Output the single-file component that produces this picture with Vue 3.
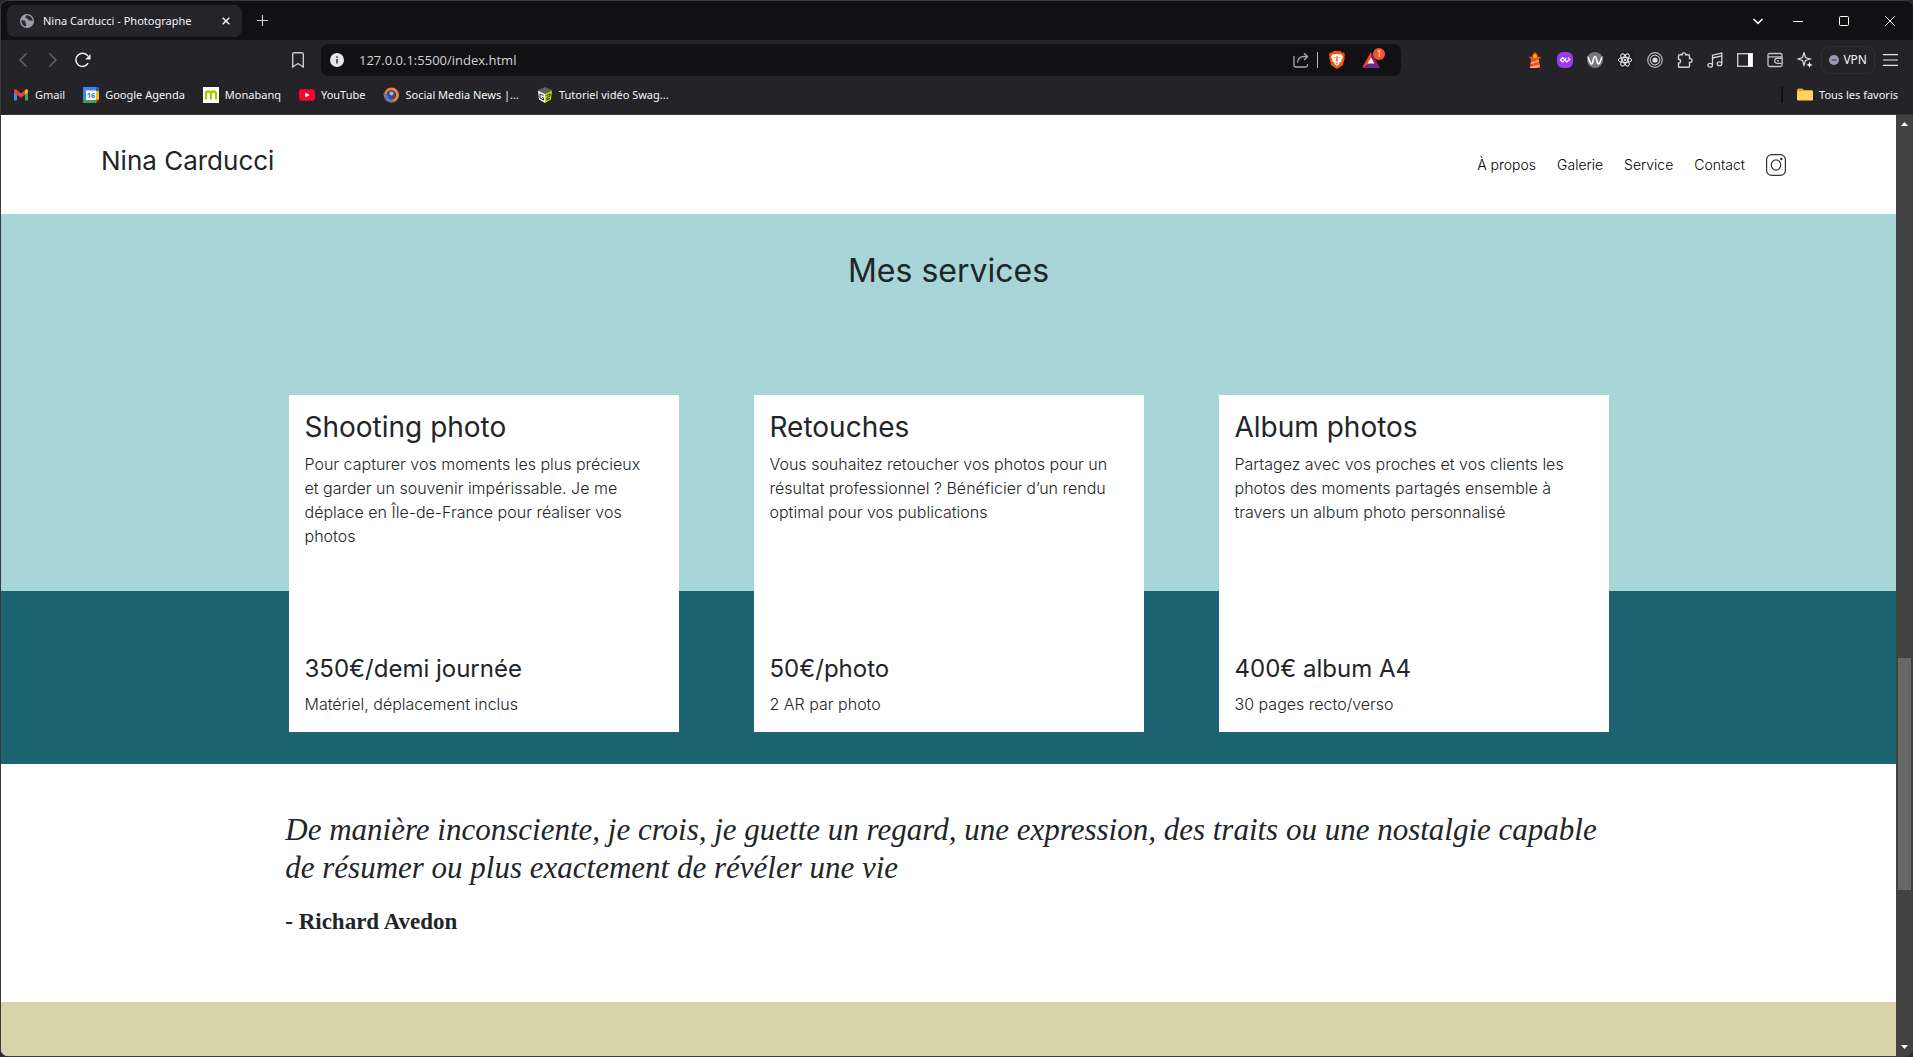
<script setup>
const bookmarks = [
  { id: 'gmail', label: 'Gmail' },
  { id: 'agenda', label: 'Google Agenda' },
  { id: 'mona', label: 'Monabanq' },
  { id: 'youtube', label: 'YouTube' },
  { id: 'social', label: 'Social Media News |...' },
  { id: 'swag', label: 'Tutoriel vidéo Swag...' },
]

const links = ['À propos', 'Galerie', 'Service', 'Contact']

const services = [
  {
    title: 'Shooting photo',
    text: 'Pour capturer vos moments les plus précieux et garder un souvenir impérissable. Je me déplace en Île-de-France pour réaliser vos photos',
    price: '350€/demi journée',
    detail: 'Matériel, déplacement inclus',
  },
  {
    title: 'Retouches',
    text: 'Vous souhaitez retoucher vos photos pour un résultat professionnel ? Bénéficier d’un rendu optimal pour vos publications',
    price: '50€/photo',
    detail: '2 AR par photo',
  },
  {
    title: 'Album photos',
    text: 'Partagez avec vos proches et vos clients les photos des moments partagés ensemble à travers un album photo personnalisé',
    price: '400€ album A4',
    detail: '30 pages recto/verso',
  },
]
</script>

<template>
  <div class="window">
    <div class="tabbar">
      <div class="tab">
        <svg width="14" height="14" viewBox="0 0 14 14"><circle cx="7" cy="7" r="7" fill="#9b9ea6" /><path d="M1.3 6.2c1.7.2 3.4-.1 4 .9.5.8-.3 1.6.5 2.2.8.5.6 1.6.1 3.2C3 12 1.200 9.500 1.300 6.200zM6.300 1.300c-.2 1.200-1.200 1.300-.9 2.200.4.8 1.600.3 1.800 1.300.2 1 1.200.7 1.600 1.300.5.7 1.700.6 3.900.6C12.500 3.500 9.800 1.200 6.300 1.300z" fill="#2b2b30" /></svg>
        <span class="tab-title">Nina Carducci - Photographe</span>
        <button class="icon-btn" aria-label="Fermer l'onglet"><svg width="8" height="8" viewBox="0 0 8 8" stroke="#f2f2f4" stroke-width="1.500"><path d="M.7.700l6.600 6.600M7.300.700L.7 7.300" /></svg></button>
      </div>
      <button class="icon-btn plus" aria-label="Nouvel onglet"><svg width="11" height="11" viewBox="0 0 11 11" stroke="#c9c9cc" stroke-width="1.200"><path d="M5.500 0v11M0 5.500h11" /></svg></button>
      <div class="win-controls">
        <button class="icon-btn" aria-label="Rechercher des onglets"><svg width="12" height="12" viewBox="0 0 12 12" fill="none" stroke="#fff" stroke-width="1.600"><path d="M1.500 4L6 8.300 10.500 4" /></svg></button>
        <button class="icon-btn" aria-label="Réduire"><svg width="10" height="10" viewBox="0 0 10 10" stroke="#fff"><path d="M0 5.500h10" /></svg></button>
        <button class="icon-btn" aria-label="Agrandir"><svg width="10" height="10" viewBox="0 0 10 10" fill="none" stroke="#fff"><rect x=".5" y=".5" width="9" height="9" rx="1" /></svg></button>
        <button class="icon-btn" aria-label="Fermer"><svg width="10" height="10" viewBox="0 0 10 10" stroke="#fff"><path d="M.3.300l9.400 9.400M9.700.300L.3 9.700" /></svg></button>
      </div>
    </div>

    <div class="toolbar">
      <div class="nav-buttons">
        <button class="icon-btn" aria-label="Précédent"><svg width="16" height="16" viewBox="0 0 16 16" fill="none" stroke="#6c6c70" stroke-width="1.300"><path d="M11.500 1.500L5 8l6.500 6.500" /></svg></button>
        <button class="icon-btn" aria-label="Suivant"><svg width="16" height="16" viewBox="0 0 16 16" fill="none" stroke="#6c6c70" stroke-width="1.300"><path d="M4.500 1.500L11 8l-6.500 6.500" /></svg></button>
        <button class="icon-btn" aria-label="Actualiser"><svg width="16" height="16" viewBox="0 0 16 16" fill="none" stroke="#f2f2f4" stroke-width="1.500"><path d="M13.200 11.200A6.600 6.600 0 1 1 13 4.200" /><path d="M15.500 2v5.500h-5.200z" fill="#f2f2f4" stroke="none" /></svg></button>
      </div>
      <button class="icon-btn" aria-label="Ajouter aux favoris"><svg width="12" height="16" viewBox="0 0 12 16" fill="none" stroke="#c9c9cc" stroke-width="1.400"><path d="M.7 15V2.200Q.7.700 2.200.700h7.600q1.500 0 1.500 1.500V15L6 11.500z" /></svg></button>
      <div class="address">
        <svg width="14" height="14" viewBox="0 0 14 14"><circle cx="7" cy="7" r="7" fill="#e6e6ea" /><path d="M6.200 6h1.600v4.500H6.200zM6.200 3.300h1.600v1.500H6.200z" fill="#3a3a3e" /></svg>
        <input type="text" value="127.0.0.1:5500/index.html" aria-label="Adresse" />
        <button class="icon-btn" aria-label="Partager"><svg width="16" height="16" viewBox="0 0 16 16" fill="none" stroke="#a9a9ad" stroke-width="1.300"><path d="M1 4v9q0 2 2 2h10q1.500 0 1.500-1.500V12M4.500 10.500C4.800 6.500 7 4.500 11 4.500h3.500M11 1.200l3.600 3.300L11 8" /></svg></button>
        <span class="divider"></span>
        <button class="icon-btn brave" aria-label="Brave Shields"><svg width="16" height="18" viewBox="0 0 16 18"><path d="M4.500 0h7l1.600 1.700 1.700-.2 1.200 2.200-.6 1.500.4 1.500-2 7.500L8 18l-5.800-3.800L.2 6.700l.4-1.500L0 3.700l1.200-2.200 1.700.2z" fill="#ff5000" /><path d="M3.500 3.500L8 3l4.500.5 1.600 2.600-1.700 2.700.3 1.400-2.400 1.500.3 1.200L8 15l-2.600-2.100.3-1.200-2.400-1.500.3-1.400L1.900 6.100z" fill="#fff" /><path d="M3.800 5.800l2.700.8-.5 1zM12.200 5.800l-2.700.8.500 1zM7.500 5h1L8.700 9l.7.800-1.400.6-1.400-.6.700-.8zM6.500 12L8 11.400 9.500 12 8 13z" fill="#ff5000" /></svg></button>
        <button class="icon-btn bat" aria-label="Brave Rewards"><svg width="18" height="16" viewBox="0 0 18 16"><path d="M9 0L0 16l9-5.500z" fill="#ff4724" /><path d="M9 0l9 16-9-5.500z" fill="#9e1f63" /><path d="M0 16h18l-9-6z" fill="#662d91" /><path d="M9 5.500L5.600 11.500h6.800z" fill="#fff" /></svg><span class="badge">1</span></button>
      </div>
      <div class="extensions">
        <svg viewBox="0 0 16 16"><path d="M5.500 2.500L8 0l2.500 2.500v2.200h3v1.800h-1.600l1.300 9.500H2.800l1.300-9.500H2.500V4.700h3z" fill="#f4511e" /><circle cx="8" cy="4.200" r="1.800" fill="#ffc107" /><path d="M4 10.500l7.800-2.500.2 1.500L3.700 12.300zM3 15l9.500-2.200.3 1.700-4 1.500H3z" fill="#ffab91" /></svg>
        <svg viewBox="0 0 16 16"><rect width="16" height="16" rx="6" fill="#9b3bf0" /><path d="M9.200 6L6.800 8.900 5.500 10 3.300 8l2.300-2.300L7.500 7.500l2 2.500 3.300-2.400L11 5.600" fill="none" stroke="#fff" stroke-width="1.200" stroke-linejoin="round" /></svg>
        <svg viewBox="0 0 16 16"><circle cx="8" cy="8" r="8" fill="#77777a" /><path d="M.5 5.500C2 4.500 2.500 12 4.500 12S6 4.500 8 4.500 9.500 12 11.500 12 14 4.500 15.500 5.500" fill="none" stroke="#fff" stroke-width="1.600" /></svg>
        <svg viewBox="0 0 16 16" fill="none" stroke="#f0f0f0" stroke-width="1"><rect width="16" height="16" fill="#1d1d20" stroke="none" /><ellipse cx="8" cy="8" rx="6.800" ry="2.600" /><ellipse cx="8" cy="8" rx="6.800" ry="2.600" transform="rotate(60 8 8)" /><ellipse cx="8" cy="8" rx="6.800" ry="2.600" transform="rotate(120 8 8)" /><circle cx="8" cy="8" r=".8" fill="#fff" /></svg>
        <svg viewBox="0 0 16 16" fill="none" stroke="#b9b9bc" stroke-width="1.200"><circle cx="8" cy="8" r="7.300" /><circle cx="8" cy="8" r="4.800" /><circle cx="8" cy="8" r="2.600" fill="#dcdcde" stroke="none" /></svg>
        <svg viewBox="0 0 16 16" fill="none" stroke="#d5d5d8" stroke-width="1.400"><path d="M1.500 4q0-1.300 1.300-1.300h2.400C4.600.2 9 .2 8.600 2.700h2.600q1.300 0 1.300 1.300v2.600c3.400-.5 3.400 4.300 0 3.800V14q0 1.300-1.300 1.300H2.800Q1.500 15.300 1.500 14v-2.700c2.700.2 2.700-4.300 0-4z" /></svg>
        <svg viewBox="0 0 16 16" fill="none" stroke="#d5d5d8" stroke-width="1.300"><path d="M5.500 13V3.200L14.800 1v10.500M5.500 6l9.300-2.200" /><ellipse cx="3.200" cy="13.200" rx="2.300" ry="1.900" /><ellipse cx="12.500" cy="11.700" rx="2.300" ry="1.900" /></svg>
        <svg viewBox="0 0 16 16"><rect x=".7" y="1.700" width="14.600" height="12.600" fill="none" stroke="#d5d5d8" stroke-width="1.300" /><path d="M11 1.500h4.500v13H11z" fill="#fff" /></svg>
        <svg viewBox="0 0 16 16" fill="none" stroke="#c5c5c8" stroke-width="1.300"><path d="M15 5V3q0-1.500-1.500-1.500h-11Q1 1.500 1 3v10q0 1.500 1.500 1.500h11Q15 14.500 15 13v-1M1 4.800h13q1.200 0 1.200 1v5.500h-5a2.500 2.500 0 0 1 0-5h5" /><path d="M10 8.800h2" /></svg>
        <svg viewBox="0 0 16 16" fill="none" stroke="#e0e0e2" stroke-width="1.200"><path d="M7 .8l1.500 4.700 4.700 1.500-4.700 1.500L7 13.200 5.500 8.500.8 7l4.700-1.500z" /><path d="M12.500 9.700l.9 2.300 2.300.9-2.300.9-.9 2.200-.9-2.200-2.300-.9 2.300-.9z" fill="#fff" stroke="none" /></svg>
      </div>
      <button class="vpn"><svg width="10" height="10" viewBox="0 0 10 10"><circle cx="5" cy="5" r="5" fill="#9a9bb0" /><path d="M2.500 5h5" stroke="#3d3d4a" stroke-width="1.200" /></svg>VPN</button>
      <button class="icon-btn menu" aria-label="Menu"><svg width="15" height="12" viewBox="0 0 15 12" stroke="#e8e8ea" stroke-width="1.200"><path d="M0 .600h15M0 6h15M0 11.400h15" /></svg></button>
    </div>

    <div class="bookmarks">
      <a v-for="b in bookmarks" :key="b.id" href="#" class="bookmark">
        <svg v-if="b.id === 'gmail'" viewBox="0 0 16 16"><path d="M1 4v9.500h3V7z" fill="#4285f4" /><path d="M15 4v9.500h-3V7z" fill="#34a853" /><path d="M1 4q0-2 1.800-1.700L8 6.500l5.200-4.200Q15 2 15 4v1.500l-7 5.200L1 5.500z" fill="#ea4335" /><path d="M12 3.300l1.200-1Q15 2 15 4v1.500L12 7.700z" fill="#fbbc04" /></svg>
        <svg v-else-if="b.id === 'agenda'" viewBox="0 0 16 16"><path d="M0 0h13v4H4v9H0z" fill="#4285f4" /><path d="M13 0h3v4h-3z" fill="#1967d2" /><path d="M12.500 4H16v9h-3.500z" fill="#fbbc04" /><path d="M0 12.500h13V16H0z" fill="#34a853" /><path d="M13 12.500h3L13 16z" fill="#ea4335" /><path d="M3 3.500h10V13H3z" fill="#fff" /><text x="8" y="11" text-anchor="middle" class="day">16</text></svg>
        <svg v-else-if="b.id === 'mona'" viewBox="0 0 16 16"><path d="M0 0h16v16H0z" fill="#fff" /><path d="M3 12.500V4M3 7q0-2.500 2.500-2.500T8 7v5.500M8 7q0-2.500 2.500-2.500T13 7v5.500" fill="none" stroke="#b1c800" stroke-width="2.300" /></svg>
        <svg v-else-if="b.id === 'youtube'" viewBox="0 0 16 16"><rect y="2.300" width="16" height="11.400" rx="3" fill="#ff0033" /><path d="M6.300 5.500l4.300 2.500-4.300 2.500z" fill="#fff" /></svg>
        <svg v-else-if="b.id === 'social'" viewBox="0 0 16 16"><circle cx="8.500" cy="8" r="6" fill="none" stroke="#f08428" stroke-width="3" /><circle cx="8" cy="8" r="4.500" fill="#34478f" /><circle cx="8.500" cy="6.500" r="2" fill="#a9b8e8" /><path d="M0 6.500l4.500 1L6 12l6 1.500-4 2-5-2z" fill="#6175bb" /></svg>
        <svg v-else viewBox="0 0 16 16"><path d="M8 0l7 3.200L8 7 1 3.200z" fill="#5e6062" /><path d="M1 3.500L8 7v9l-6-3.500z" fill="#f1f1f1" /><path d="M15 3.500L8 7v9l6-3.500z" fill="#b5d900" /><path d="M6.500 8.500L3 7v4l3.500 2v-2L4.800 10M9.500 8.500L13 7v2l-3 1.500V13l3-1.800" fill="none" stroke="#333" stroke-width="1" /></svg>
        {{ b.label }}
      </a>
      <a href="#" class="bookmark all">
        <svg viewBox="0 0 16 16"><path d="M0 3q0-1.500 1.500-1.500h3.700L7 3h7.500Q16 3 16 4.500V6H0z" fill="#e8a51c" /><path d="M0 5q0-1 1-1h14q1 0 1 1v7.500q0 1-1 1H1q-1 0-1-1z" fill="#ffd45e" /></svg>
        Tous les favoris
      </a>
    </div>

    <div class="viewport">
      <div class="site">
        <header class="header">
          <h1>Nina Carducci</h1>
          <nav>
            <a v-for="l in links" :key="l" href="#">{{ l }}</a>
            <a href="#" aria-label="Instagram"><svg width="20" height="22" viewBox="0 0 20 22" fill="none" stroke="#333" stroke-width="1.200"><rect x=".6" y=".6" width="18.800" height="20.800" rx="5" /><ellipse cx="10" cy="11" rx="4.700" ry="5.200" /><circle cx="15.300" cy="5" r=".7" fill="#333" /></svg></a>
          </nav>
        </header>

        <section class="services">
          <h2>Mes services</h2>
          <div class="cards">
            <article v-for="s in services" :key="s.title" class="card">
              <h3>{{ s.title }}</h3>
              <p>{{ s.text }}</p>
              <h4>{{ s.price }}</h4>
              <p>{{ s.detail }}</p>
            </article>
          </div>
        </section>

        <section class="quote">
          <blockquote>De manière inconsciente, je crois, je guette un regard, une expression, des traits ou une nostalgie capable de résumer ou plus exactement de révéler une vie</blockquote>
          <p class="author">- Richard Avedon</p>
        </section>

        <section class="contact"></section>
      </div>
      <div class="scrollbar">
        <svg width="7" height="4" viewBox="0 0 7 4"><path d="M0 4L3.500 0 7 4z" fill="#fff" /></svg>
        <div class="track"><div class="thumb"></div></div>
        <svg width="7" height="4" viewBox="0 0 7 4"><path d="M0 0l3.500 4L7 0z" fill="#fff" /></svg>
      </div>
    </div>
  </div>
</template>

<style>
body {
  background: #2b2b2e;
}
</style>

<style scoped>
* {
  box-sizing: border-box;
}
h1, h2, h3, h4, p, blockquote {
  margin: 0;
}
a {
  color: inherit;
  text-decoration: none;
}
button {
  border: 0;
  background: none;
  padding: 0;
  color: inherit;
  font: inherit;
}
svg {
  display: block;
  flex: none;
}
.window {
  display: flex;
  flex-direction: column;
  min-height: 100vh;
  border: 1px solid #3a3a3d;
  border-right: 0;
  border-radius: 8px;
  overflow: hidden;
  background: #242428;
  color: #f4f4f6;
  font: 11px/16px "Noto Sans", "Open Sans", sans-serif;
}
.icon-btn {
  display: flex;
  align-items: center;
  justify-content: center;
}
.tabbar {
  display: flex;
  align-items: center;
  height: 39px;
  padding: 0 18px 0 6px;
  background: #111113;
}
.tab {
  display: flex;
  align-items: center;
  gap: 9px;
  width: 235px;
  height: 32px;
  padding: 0 12px 0 13px;
  border-radius: 8px;
  background: #252529;
}
.tab-title {
  flex: 1;
  white-space: nowrap;
}
.plus {
  margin-left: 15px;
}
.win-controls {
  display: flex;
  align-items: center;
  gap: 36px;
  margin-left: auto;
}
.win-controls .icon-btn:first-child {
  margin-right: -7px;
}
.toolbar {
  display: flex;
  align-items: center;
  height: 40px;
  padding: 0 15px 0 14px;
}
.nav-buttons {
  display: flex;
  gap: 14px;
  margin-right: 201px;
}
.address {
  display: flex;
  flex: 1;
  align-items: center;
  height: 32px;
  margin: 0 126px 0 17px;
  padding: 0 21px 0 9px;
  border-radius: 8px;
  background: #111113;
}
.address input {
  flex: 1;
  min-width: 0;
  margin: 0 15px;
  padding: 0;
  border: 0;
  outline: 0;
  background: none;
  color: #d4d4d7;
  font: 13px/20px "Open Sans", "Noto Sans", sans-serif;
}
.divider {
  width: 1px;
  height: 16px;
  margin: 0 11px 0 8px;
  background: #b9b9bc;
}
.brave {
  margin-right: 17px;
}
.bat {
  position: relative;
}
.badge {
  position: absolute;
  top: -4px;
  left: 11px;
  width: 12px;
  height: 12px;
  border-radius: 6px;
  background: #fb542b;
  color: #fff;
  font-size: 8px;
  line-height: 12px;
  text-align: center;
}
.extensions {
  display: flex;
  gap: 14px;
}
.extensions svg {
  width: 16px;
  height: 16px;
}
.vpn {
  display: flex;
  align-items: center;
  gap: 4px;
  height: 28px;
  margin: 0 8px;
  padding: 0 7px;
  border: 1px solid #303034;
  border-radius: 8px;
  font-size: 12px;
}
.bookmarks {
  display: flex;
  align-items: center;
  gap: 18px;
  height: 35px;
  padding: 0 15px 5px 12px;
  border-bottom: 1px solid #36363a;
}
.bookmark {
  display: flex;
  align-items: center;
  gap: 6px;
  white-space: nowrap;
}
.bookmark svg {
  width: 16px;
  height: 16px;
}
.day {
  font: bold 7px "Open Sans", sans-serif;
  fill: #1a73e8;
}
.all {
  margin-left: auto;
  padding-left: 14px;
  border-left: 2px solid #111113;
}
.viewport {
  display: flex;
  flex: 1;
}
.site {
  display: flex;
  flex: 1;
  flex-direction: column;
  background: #fff;
  color: #212529;
  font: 300 16px/24px Inter, sans-serif;
}
.header {
  display: flex;
  justify-content: space-between;
  height: 99px;
  padding: 26px 110px 0 100px;
}
.header h1 {
  font-size: 26px;
  font-weight: 400;
  line-height: 40px;
}
.header nav {
  display: flex;
  align-items: center;
  gap: 21px;
  height: 48px;
  color: #000;
  font-size: 14px;
}
.services {
  padding: 36px 24px 32px;
  background: linear-gradient(#a8d5d8 377px, #1c6471 377px);
}
.services h2 {
  margin-bottom: 103px;
  font-size: 32px;
  font-weight: 400;
  line-height: 42px;
  text-align: center;
}
.cards {
  display: grid;
  grid-template-columns: repeat(3, 1fr);
  gap: 75px;
  max-width: 1320px;
  margin: 0 auto;
}
.card {
  display: flex;
  flex-direction: column;
  min-height: 337px;
  padding: 16px;
  background: #fff;
}
.card h3 {
  margin-bottom: 9px;
  font-size: 28px;
  font-weight: 400;
  line-height: 32px;
}
.card h4 {
  margin: auto 0 8px;
  font-size: 24px;
  font-weight: 400;
  line-height: 30px;
}
.card p {
  padding-right: 8px;
}
.quote {
  width: 70%;
  margin: 0 auto;
  padding: 47px 0 65px;
  font-family: "Liberation Serif", serif;
}
.quote blockquote {
  font-size: 31px;
  font-style: italic;
  font-weight: 400;
  line-height: 38px;
}
.author {
  margin-top: 20px;
  font-size: 23px;
  font-weight: 700;
  line-height: 30px;
}
.contact {
  flex: 1;
  min-height: 48px;
  background: #d8d3a8;
}
.scrollbar {
  display: flex;
  flex-direction: column;
  align-items: center;
  width: 17px;
  padding: 7px 0;
  background: #424242;
}
.track {
  display: flex;
  flex: 1;
  flex-direction: column;
  width: 13px;
  margin: 6px 0;
}
.track::before {
  flex: 526;
  content: "";
}
.thumb {
  flex: 232;
  background: #686868;
}
.track::after {
  flex: 149;
  content: "";
}
</style>
